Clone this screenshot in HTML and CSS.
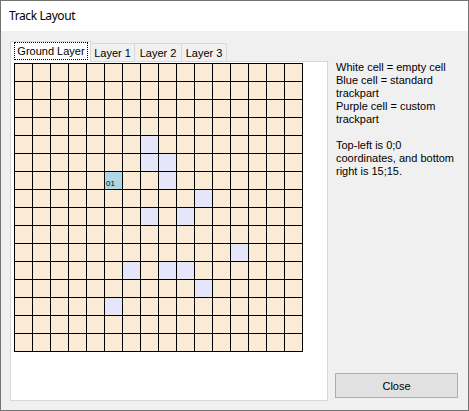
FILE: index.html
```html
<!DOCTYPE html>
<html>
<head>
<meta charset="utf-8">
<title>Track Layout</title>
<link rel="stylesheet" href="styles.css">
</head>
<body>
<div class="window">
  <div class="titlebar">Track Layout</div>
  <div class="content">
    <div class="left">
      <div class="tabs">
        <div class="tab active"><span class="focus">Ground Layer</span></div>
        <div class="tab w44">Layer 1</div>
        <div class="tab w47">Layer 2</div>
        <div class="tab w45">Layer 3</div>
      </div>
      <div class="panel">
        <div class="grid">
          <span></span><span></span><span></span><span></span><span></span><span></span><span></span><span></span><span></span><span></span><span></span><span></span><span></span><span></span><span></span><span></span>
          <span></span><span></span><span></span><span></span><span></span><span></span><span></span><span></span><span></span><span></span><span></span><span></span><span></span><span></span><span></span><span></span>
          <span></span><span></span><span></span><span></span><span></span><span></span><span></span><span></span><span></span><span></span><span></span><span></span><span></span><span></span><span></span><span></span>
          <span></span><span></span><span></span><span></span><span></span><span></span><span></span><span></span><span></span><span></span><span></span><span></span><span></span><span></span><span></span><span></span>
          <span></span><span></span><span></span><span></span><span></span><span></span><span></span><span class="custom"></span><span></span><span></span><span></span><span></span><span></span><span></span><span></span><span></span>
          <span></span><span></span><span></span><span></span><span></span><span></span><span></span><span class="custom"></span><span class="custom"></span><span></span><span></span><span></span><span></span><span></span><span></span><span></span>
          <span></span><span></span><span></span><span></span><span></span><span class="standard">01</span><span></span><span></span><span class="custom"></span><span></span><span></span><span></span><span></span><span></span><span></span><span></span>
          <span></span><span></span><span></span><span></span><span></span><span></span><span></span><span></span><span></span><span></span><span class="custom"></span><span></span><span></span><span></span><span></span><span></span>
          <span></span><span></span><span></span><span></span><span></span><span></span><span></span><span class="custom"></span><span></span><span class="custom"></span><span></span><span></span><span></span><span></span><span></span><span></span>
          <span></span><span></span><span></span><span></span><span></span><span></span><span></span><span></span><span></span><span></span><span></span><span></span><span></span><span></span><span></span><span></span>
          <span></span><span></span><span></span><span></span><span></span><span></span><span></span><span></span><span></span><span></span><span></span><span></span><span class="custom"></span><span></span><span></span><span></span>
          <span></span><span></span><span></span><span></span><span></span><span></span><span class="custom"></span><span></span><span class="custom"></span><span class="custom"></span><span></span><span></span><span></span><span></span><span></span><span></span>
          <span></span><span></span><span></span><span></span><span></span><span></span><span></span><span></span><span></span><span></span><span class="custom"></span><span></span><span></span><span></span><span></span><span></span>
          <span></span><span></span><span></span><span></span><span></span><span class="custom"></span><span></span><span></span><span></span><span></span><span></span><span></span><span></span><span></span><span></span><span></span>
          <span></span><span></span><span></span><span></span><span></span><span></span><span></span><span></span><span></span><span></span><span></span><span></span><span></span><span></span><span></span><span></span>
          <span></span><span></span><span></span><span></span><span></span><span></span><span></span><span></span><span></span><span></span><span></span><span></span><span></span><span></span><span></span><span></span>
        </div>
      </div>
    </div>
    <div class="side">
      <div class="info">
        <p>White cell = empty cell<br>Blue cell = standard trackpart<br>Purple cell = custom trackpart</p>
        <p>Top-left is 0;0 coordinates, and bottom right is 15;15.</p>
      </div>
      <button class="close">Close</button>
    </div>
  </div>
</div>
</body>
</html>
```

FILE: styles.css
```css
* { box-sizing: border-box; }
html, body { margin: 0; padding: 0; }
body { width: 469px; height: 411px; overflow: hidden; background: #fff; }

.window {
  width: 469px;
  height: 411px;
  border: 1px solid #737373;
  background: #f0f0f0;
  display: flex;
  flex-direction: column;
  font-family: "Liberation Sans", Arial, sans-serif;
  font-size: 11px;
  color: #000;
}

.titlebar {
  height: 30px;
  flex: none;
  background: #fff;
  padding-left: 8px;
  font-family: "Noto Sans", sans-serif;
  font-size: 12px;
  letter-spacing: -0.4px;
  line-height: 30px;
  color: #000;
}

.content {
  flex: 1;
  display: flex;
  padding: 10px 0 0 9px;
}

.left {
  width: 318px;
  flex: none;
  display: flex;
  flex-direction: column;
}

.tabs {
  display: flex;
  align-items: flex-end;
  height: 20px;
}

.tab {
  height: 18px;
  border-top: 1px solid #d9d9d9;
  border-right: 1px solid #d9d9d9;
  display: flex;
  align-items: center;
  justify-content: center;
  white-space: nowrap;
  padding-top: 1px;
}
.tab.w44 { width: 44px; }
.tab.w45 { width: 45px; }
.tab.w47 { width: 47px; }

.tab.active {
  width: 81px;
  height: 21px;
  margin-bottom: -1px;
  background: #fff;
  border: 1px solid #d9d9d9;
  border-bottom: none;
  position: relative;
  z-index: 1;
  padding: 0 2px 2px 3px;
  align-items: stretch;
}

.focus {
  flex: 1;
  border: 1px dotted #000;
  display: flex;
  align-items: center;
  justify-content: center;
}

.panel {
  height: 340px;
  border: 1px solid #d9d9d9;
  background: #fff;
  padding: 1px 0 0 3px;
}

.grid {
  display: grid;
  grid-template-columns: repeat(16, 17px);
  grid-auto-rows: 17px;
  gap: 1px;
  padding: 1px;
  width: 289px;
  background: #000;
}
.grid span {
  background: #faebd7;
  display: flex;
  align-items: flex-end;
  font-size: 8px;
  line-height: 8px;
  padding: 0 0 1px 1px;
}
.grid span.custom { background: #e6e6fa; }
.grid span.standard { background: #add8e6; }

.side {
  flex: 1;
  display: flex;
  flex-direction: column;
}

.info {
  margin-top: 20px;
  padding-left: 8px;
  width: 133px;
  line-height: 13px;
}
.info p { margin: 0; }
.info p + p { margin-top: 13px; }

.close {
  margin: auto 0 12px 7px;
  width: 123px;
  height: 25px;
  border: 1px solid #adadad;
  background: #e1e1e1;
  font-family: "Liberation Sans", Arial, sans-serif;
  font-size: 11px;
  color: #000;
  padding: 0;
}
```
